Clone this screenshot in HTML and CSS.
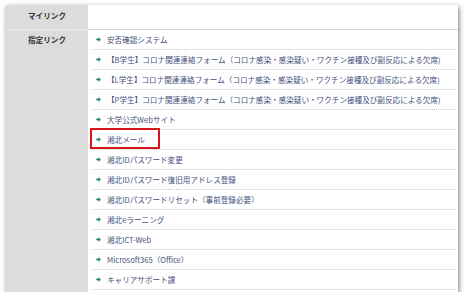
FILE: index.html
```html
<!DOCTYPE html>
<html lang="ja">
<head>
  <meta charset="UTF-8">
  <title>リンク</title>
  <link rel="stylesheet" href="styles.css">
</head>
<body>
  <table class="links">
    <tr class="row-my">
      <th>マイリンク</th>
      <td></td>
    </tr>
    <tr class="row-fixed">
      <th>指定リンク</th>
      <td>
        <ul class="link-list">
          <li><span class="arrow"></span><a href="#">安否確認システム</a></li>
          <li><span class="arrow"></span><a href="#">【B学生】コロナ関連連絡フォーム（コロナ感染・感染疑い・ワクチン接種及び副反応による欠席)</a></li>
          <li><span class="arrow"></span><a href="#">【L学生】コロナ関連連絡フォーム（コロナ感染・感染疑い・ワクチン接種及び副反応による欠席)</a></li>
          <li><span class="arrow"></span><a href="#">【P学生】コロナ関連連絡フォーム（コロナ感染・感染疑い・ワクチン接種及び副反応による欠席)</a></li>
          <li><span class="arrow"></span><a href="#">大学公式Webサイト</a></li>
          <li class="marked"><span class="arrow"></span><a href="#">湘北メール</a></li>
          <li><span class="arrow"></span><a href="#">湘北IDパスワード変更</a></li>
          <li><span class="arrow"></span><a href="#">湘北IDパスワード復旧用アドレス登録</a></li>
          <li><span class="arrow"></span><a href="#">湘北IDパスワードリセット（事前登録必要）</a></li>
          <li><span class="arrow"></span><a href="#">湘北eラーニング</a></li>
          <li><span class="arrow"></span><a href="#">湘北ICT-Web</a></li>
          <li><span class="arrow"></span><a href="#">Microsoft365（Office）</a></li>
          <li><span class="arrow"></span><a href="#">キャリアサポート課</a></li>
        </ul>
      </td>
    </tr>
  </table>
</body>
</html>
```

FILE: styles.css
```css
body {
  margin: 0;
  background: #fff;
  font-family: "Noto Sans CJK JP", "Noto Sans", sans-serif;
}
.links {
  margin: 5px 0 0 6px;
  width: 452px;
  border-collapse: collapse;
  background: #fff;
  box-shadow: 1px 2px 5px rgba(0, 0, 0, 0.55);
}
.links th {
  width: 82px;
  padding: 0;
  background: #dcdcdc;
  color: #333;
  font-size: 7.6px;
  font-weight: bold;
  text-align: center;
  vertical-align: top;
}
.links td {
  padding: 0 3px 2px 4px;
  vertical-align: top;
}
.row-my th,
.row-my td {
  height: 22px;
  line-height: 22px;
  border-bottom: 1px solid #d4d4d4;
}
.row-my th {
  border-bottom-color: #ebebeb;
}
.row-fixed th {
  line-height: 19px;
  padding-top: 0;
}
.link-list {
  list-style: none;
  margin: 0;
  padding: 0;
}
.link-list li {
  position: relative;
  display: flex;
  align-items: center;
  height: 19px;
  padding-left: 4px;
  border-bottom: 1px dotted #c8c8c8;
  font-size: 7.6px;
  white-space: nowrap;
}
.link-list a {
  color: #45507c;
  text-decoration: none;
}
.arrow {
  width: 5px;
  height: 5px;
  margin-right: 6px;
  background: #2b8c74;
  clip-path: polygon(0 35%, 45% 35%, 45% 0, 100% 50%, 45% 100%, 45% 65%, 0 65%);
}
.marked::after {
  content: "";
  position: absolute;
  left: -2px;
  top: -2px;
  width: 66px;
  height: 17px;
  border: 2.5px solid #d8141c;
}
```
